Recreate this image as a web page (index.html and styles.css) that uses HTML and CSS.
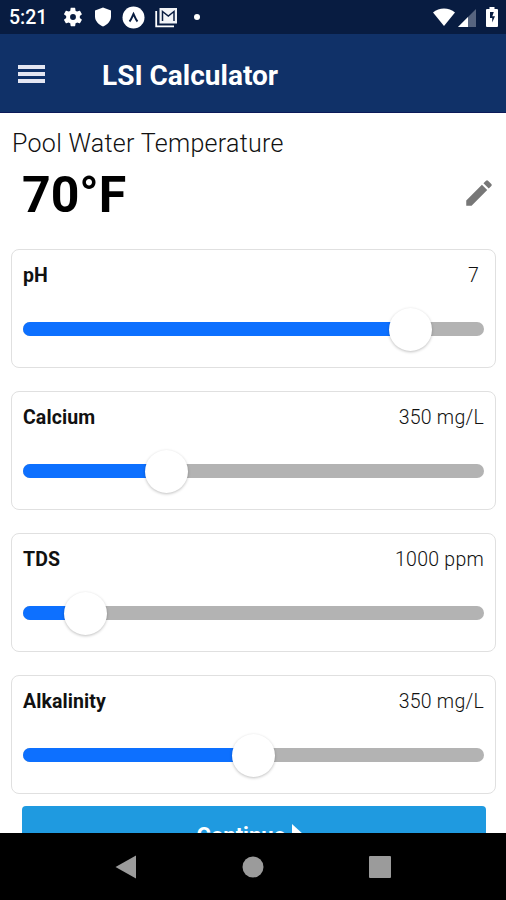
FILE: index.html
```html
<!DOCTYPE html>
<html lang="en">
<head>
    <meta charset="UTF-8">
    <meta name="viewport" content="width=device-width, initial-scale=1.0">
    <title>LSI Calculator</title>
    <link rel="stylesheet" href="styles.css">
</head>
<body>
    <div class="app">
        <div class="status-bar">
            <span class="time">5:21</span>
            <div class="status-left">
                <svg width="22" height="22" viewBox="0 0 24 24" fill="#fff"><path d="M19.4 13c0-.3.1-.6.1-1s0-.7-.1-1l2.1-1.600c.2-.2.3-.4.100-.700l-2-3.400c-.1-.2-.4-.3-.6-.2l-2.500 1c-.5-.4-1.100-.7-1.700-1l-.4-2.600c0-.3-.2-.5-.5-.5h-4c-.2 0-.5.2-.5.4l-.4 2.700c-.6.2-1.100.6-1.700 1l-2.500-1c-.2-.1-.5 0-.6.2l-2 3.400c-.1.300 0 .5.200.700L4.600 11c0 .3-.1.6-.1 1s0 .7.1 1l-2.200 1.600c-.2.200-.3.400-.2.700l2 3.400c.1.200.4.300.6.200l2.500-1c.6.400 1.100.800 1.700 1l.4 2.700c0 .200.3.400.5.400h4c.3 0 .5-.2.500-.4l.4-2.700c.6-.2 1.200-.6 1.700-1l2.500 1c.2.100.5 0 .6-.2l2-3.400c.2-.3.1-.5-.1-.7zM12 15.200a3.200 3.200 0 1 1 0-6.400 3.200 3.200 0 0 1 0 6.400z"/></svg>
                <svg width="18" height="20" viewBox="0 0 18 20" fill="#fff"><path d="M9 .5 17 3.500v6c0 4.500-3.500 8-8 10-4.500-2-8-5.500-8-10v-6z"/></svg>
                <svg width="23" height="23" viewBox="0 0 23 23"><circle cx="11.500" cy="11.500" r="11" fill="#fff"/><path d="M7.500 15.500c2-2 2.500-4.500 4-7.500 1.500 3 2 5.500 4 7.500" fill="none" stroke="#081c41" stroke-width="2"/></svg>
                <svg width="23" height="21" viewBox="0 0 23 21"><path d="M1.200 4v15.300H19" fill="none" stroke="#fff" stroke-width="1.800"/><path d="M4.500 1h17.500v15.500h-17.500z" fill="#f1f3f7"/><path d="M7.500 14V4.500l5.800 4.500L19 4.500V14" fill="none" stroke="#081c41" stroke-width="1.500"/></svg>
                <span class="dot"></span>
            </div>
            <div class="status-right">
                <svg width="22" height="19" viewBox="0 0 22 19"><path d="M0 4.500C6-.8 16-.8 22 4.500L11 18z" fill="#fff"/></svg>
                <svg width="18" height="18" viewBox="0 0 18 18"><path d="M18 0v18H0z" fill="#56647f"/><path d="M10 8v10H0z" fill="#fff"/></svg>
                <svg width="12" height="20" viewBox="0 0 12 20"><path d="M3.500 0h5v2H11q1 0 1 1v16q0 1-1 1H1q-1 0-1-1V3q0-1 1-1h2.500z" fill="#fff"/><path d="M7.800 5H4v6h2.200v4.500L9 9.200H6.300z" fill="#081c41"/></svg>
            </div>
        </div>

        <div class="header">
            <div class="menu-icon"><span></span><span></span><span></span></div>
            <h1>LSI Calculator</h1>
        </div>

        <div class="content">
            <div class="temp-label">Pool Water Temperature</div>
            <div class="temp-row">
                <span class="temp-value">70°F</span>
                <svg width="34" height="34" viewBox="0 0 24 24" fill="#777"><path d="M3 17.250V21h3.750L17.810 9.940l-3.750-3.750zM20.710 7.040a1 1 0 0 0 0-1.410l-2.340-2.340a1 1 0 0 0-1.410 0l-1.830 1.830 3.750 3.750z"/></svg>
            </div>

            <div class="card">
                <div class="card-head"><span class="name">pH</span><span class="value value-short">7</span></div>
                <div class="slider"><div class="fill" style="width: 84.1%"></div><div class="thumb"></div></div>
            </div>
            <div class="card">
                <div class="card-head"><span class="name">Calcium</span><span class="value">350 mg/L</span></div>
                <div class="slider"><div class="fill" style="width: 31.1%"></div><div class="thumb"></div></div>
            </div>
            <div class="card">
                <div class="card-head"><span class="name">TDS</span><span class="value">1000 ppm</span></div>
                <div class="slider"><div class="fill" style="width: 13.6%"></div><div class="thumb"></div></div>
            </div>
            <div class="card">
                <div class="card-head"><span class="name">Alkalinity</span><span class="value">350 mg/L</span></div>
                <div class="slider"><div class="fill" style="width: 50%"></div><div class="thumb"></div></div>
            </div>

            <button class="continue">Continue
                <svg width="12" height="22" viewBox="0 0 12 22" fill="#fff"><path d="M0 0l12 11L0 22z"/></svg>
            </button>
        </div>

        <div class="nav-bar">
            <svg width="22" height="24" viewBox="0 0 22 24" fill="#9b9b9b"><path d="M21 .5v23L.5 12z"/></svg>
            <svg width="22" height="22" viewBox="0 0 22 22" fill="#9b9b9b"><circle cx="11" cy="11" r="10.500"/></svg>
            <svg width="22" height="22" viewBox="0 0 22 22" fill="#9b9b9b"><rect width="22" height="22" rx="1"/></svg>
        </div>
    </div>
</body>
</html>
```
FILE: styles.css
```css
* {
    box-sizing: border-box;
}
body {
    margin: 0;
    font-family: Roboto, sans-serif;
    background: #fff;
    color: #111;
}
svg {
    display: block;
    flex: none;
}
.app {
    display: flex;
    flex-direction: column;
    height: 900px;
    overflow: hidden;
}
.status-bar {
    display: flex;
    align-items: center;
    height: 34px;
    flex: none;
    padding: 0 8px 0 9px;
    background: #081c41;
    color: #fff;
}
.time {
    width: 53px;
    font-size: 19.5px;
    font-weight: 500;
    line-height: 34px;
    padding-top: 2px;
}
.status-left {
    display: flex;
    align-items: center;
    gap: 10px;
}
.dot {
    width: 6px;
    height: 6px;
    margin-left: 6px;
    border-radius: 50%;
    background: #fff;
}
.status-right {
    display: flex;
    align-items: center;
    margin-left: auto;
}
.status-right svg:nth-child(2) {
    margin: 2px 10px 0 3px;
}
.header {
    display: flex;
    align-items: center;
    height: 79px;
    flex: none;
    padding: 2px 18px 0;
    background: #103168;
    border-bottom: 1px solid #0c1a59;
    color: #fff;
}
.menu-icon {
    display: flex;
    flex-direction: column;
    gap: 3px;
    width: 27px;
    margin-right: 57px;
}
.menu-icon span {
    height: 4px;
    background: #e4e6f2;
}
h1 {
    margin: 0;
    padding-top: 2px;
    font-size: 28px;
    font-weight: 700;
}
.content {
    flex: 1;
    min-height: 0;
    overflow: hidden;
    padding: 15px 10px 0 11px;
}
.temp-label {
    padding-left: 1px;
    font-size: 25px;
    font-weight: 300;
    line-height: 32px;
    letter-spacing: 0.3px;
}
.temp-row {
    display: flex;
    align-items: center;
    justify-content: space-between;
    height: 70px;
    padding-left: 11px;
    margin-bottom: 19px;
}
.temp-row svg {
    margin-top: -4px;
}
.temp-value {
    font-size: 50px;
    font-weight: 700;
    color: #000;
}
.card {
    height: 119px;
    margin-bottom: 23px;
    padding: 10px 11px;
    border: 1px solid #e0e0e0;
    border-radius: 8px;
}
.card-head {
    display: flex;
    justify-content: space-between;
    font-size: 19.5px;
    line-height: 31px;
}
.name {
    font-weight: 700;
    letter-spacing: 0.1px;
}
.value {
    font-weight: 300;
    letter-spacing: 0.25px;
}
.value-short {
    padding-right: 5px;
}
.slider {
    display: flex;
    align-items: center;
    height: 14px;
    margin-top: 31px;
    border-radius: 7px;
    background: #b3b3b3;
}
.fill {
    height: 14px;
    border-radius: 7px 0 0 7px;
    background: #0d70ff;
}
.thumb {
    flex: none;
    width: 43px;
    height: 43px;
    margin-left: -21.5px;
    border-radius: 50%;
    background: #fff;
    box-shadow: 0 1px 3px rgba(0, 0, 0, 0.25);
}
.continue {
    display: flex;
    justify-content: center;
    align-items: center;
    gap: 7px;
    width: 464px;
    height: 60px;
    margin: -11px 0 0 11px;
    padding: 0 7px 2px 0;
    border: none;
    border-radius: 4px;
    background: #1f9ae0;
    color: #fff;
    font: 700 22px Roboto, sans-serif;
}
.nav-bar {
    display: flex;
    justify-content: center;
    align-items: center;
    gap: 105px;
    height: 67px;
    flex: none;
    background: #000;
}
```
